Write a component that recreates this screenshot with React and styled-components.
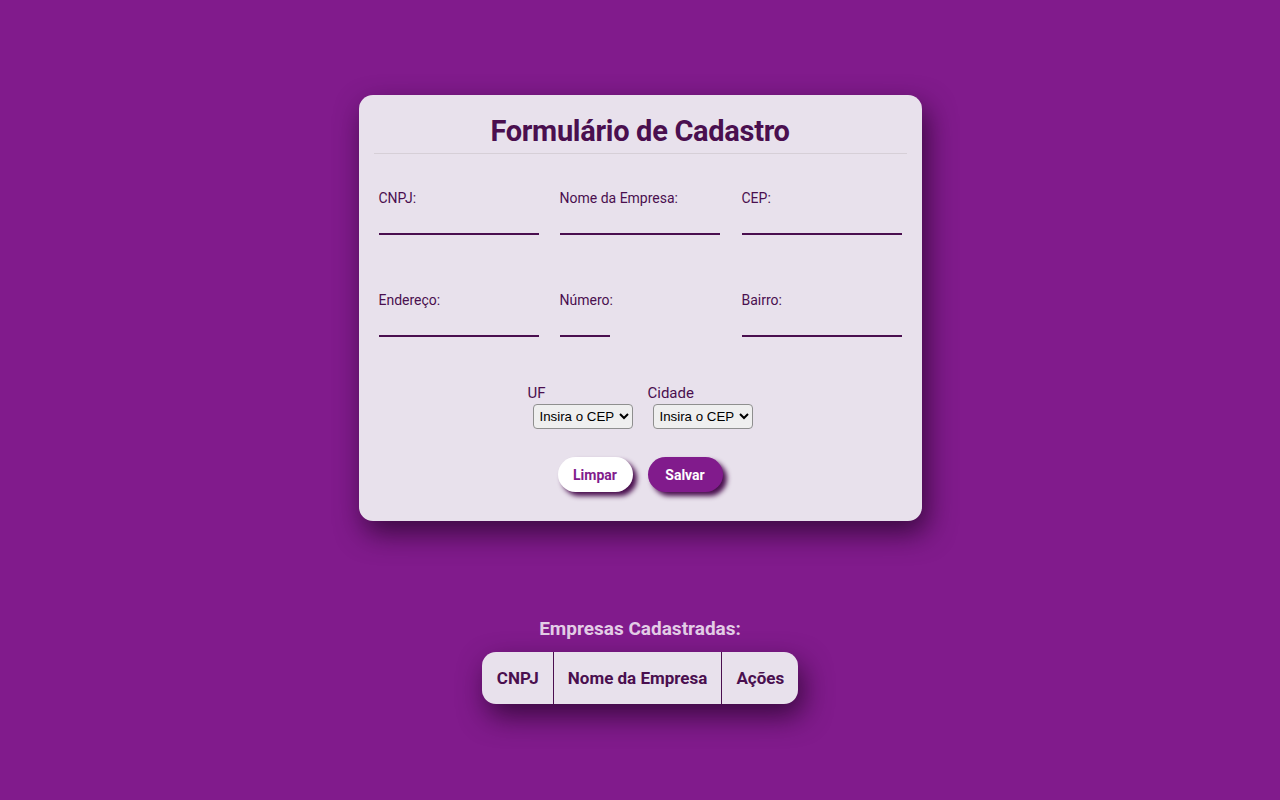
import React from "react";
import styled, { createGlobalStyle } from "styled-components";

const Global = createGlobalStyle`
  html, body { margin: 0; padding: 0; }
  body {
    background: #811b8c;
    font-family: "Roboto", "Open Sans", sans-serif;
    min-height: 800px;
  }
`;

const Page = styled.div`
  display: flex;
  flex-direction: column;
  align-items: center;
  padding-top: 95px;
`;

const Card = styled.form`
  width: 563px;
  box-sizing: border-box;
  background: #e8e1ec;
  border-radius: 14px;
  box-shadow: 5px 12px 28px rgba(55, 8, 60, 0.95);
  padding: 18px 15px 29px;
  display: flex;
  flex-direction: column;
  align-items: center;
`;

const Title = styled.h1`
  margin: 0;
  font-size: 29px;
  font-weight: 700;
  color: #4a0f4f;
  letter-spacing: -0.3px;
  line-height: 36px;
`;

const Rule = styled.hr`
  align-self: stretch;
  border: none;
  border-top: 1px solid #d6cfd7;
  margin: 4px 0 0;
`;

const Grid = styled.div`
  display: grid;
  grid-template-columns: 160px 161px 160px;
  column-gap: 21px;
  row-gap: 57px;
  margin-top: 36px;
`;

const Field = styled.label`
  display: flex;
  flex-direction: column;
  align-items: flex-start;
  font-size: 14px;
  color: #4a0f4f;
  line-height: 16px;
`;

const Input = styled.input`
  margin-top: 9px;
  width: ${(p) => p.$w || 160}px;
  height: 20px;
  box-sizing: border-box;
  border: none;
  border-bottom: 2px solid #4a0f4f;
  background: transparent;
  outline: none;
  padding: 0;
`;

const SelectRow = styled.div`
  display: flex;
  gap: 15px;
  margin-top: 48px;
`;

const SelectBlock = styled.label`
  display: flex;
  flex-direction: column;
  align-items: flex-start;
  width: 105px;
  font-size: 15px;
  color: #4a0f4f;
  line-height: 17px;
`;

const Select = styled.select`
  margin: 2px 0 0 5px;
  width: 100px;
  height: 25px;
  font-family: "Liberation Sans", Arial, sans-serif;
  font-size: 13.3px;
  color: #000;
  background: #efefef;
  border: 1px solid #8f8f8f;
  border-radius: 4px;
  padding: 0 2px;
`;

const Buttons = styled.div`
  display: flex;
  gap: 15px;
  margin-top: 28px;
`;

const Button = styled.button`
  width: 75px;
  height: 35px;
  border: none;
  border-radius: 18px;
  font-family: "Roboto", sans-serif;
  font-weight: 700;
  font-size: 14px;
  cursor: pointer;
  background: ${(p) => (p.$primary ? "#811b8c" : "#ffffff")};
  color: ${(p) => (p.$primary ? "#ffffff" : "#811b8c")};
  box-shadow: 4px 4px 5px #4a0f4f;
`;

const ListTitle = styled.h2`
  margin: 96px 0 0;
  font-size: 19px;
  font-weight: 700;
  color: #e3cde6;
  line-height: 24px;
`;

const Table = styled.table`
  margin-top: 11px;
  border-collapse: separate;
  border-spacing: 0;
  background: #e8e1ec;
  border-radius: 14px;
  box-shadow: 5px 12px 28px rgba(55, 8, 60, 0.95);
  overflow: hidden;
`;

const Th = styled.th`
  height: 52px;
  padding: 0 14px 0 ${(p) => (p.$first ? 15 : 14)}px;
  font-size: 17px;
  font-weight: 700;
  color: #4a0f4f;
  border-left: ${(p) => (p.$first ? "none" : "1px solid #4a0f4f")};
  white-space: nowrap;
`;

export default function App() {
  return (
    <>
      <Global />
      <Page>
        <Card onSubmit={(e) => e.preventDefault()}>
          <Title>Formulário de Cadastro</Title>
          <Rule />
          <Grid>
            <Field>
              CNPJ:
              <Input />
            </Field>
            <Field>
              Nome da Empresa:
              <Input />
            </Field>
            <Field>
              CEP:
              <Input />
            </Field>
            <Field>
              Endereço:
              <Input />
            </Field>
            <Field>
              Número:
              <Input $w={50} />
            </Field>
            <Field>
              Bairro:
              <Input />
            </Field>
          </Grid>
          <SelectRow>
            <SelectBlock>
              UF
              <Select>
                <option>Insira o CEP</option>
              </Select>
            </SelectBlock>
            <SelectBlock>
              Cidade
              <Select>
                <option>Insira o CEP</option>
              </Select>
            </SelectBlock>
          </SelectRow>
          <Buttons>
            <Button type="reset">Limpar</Button>
            <Button type="submit" $primary>
              Salvar
            </Button>
          </Buttons>
        </Card>
        <ListTitle>Empresas Cadastradas:</ListTitle>
        <Table>
          <thead>
            <tr>
              <Th $first>CNPJ</Th>
              <Th>Nome da Empresa</Th>
              <Th>Ações</Th>
            </tr>
          </thead>
        </Table>
      </Page>
    </>
  );
}
